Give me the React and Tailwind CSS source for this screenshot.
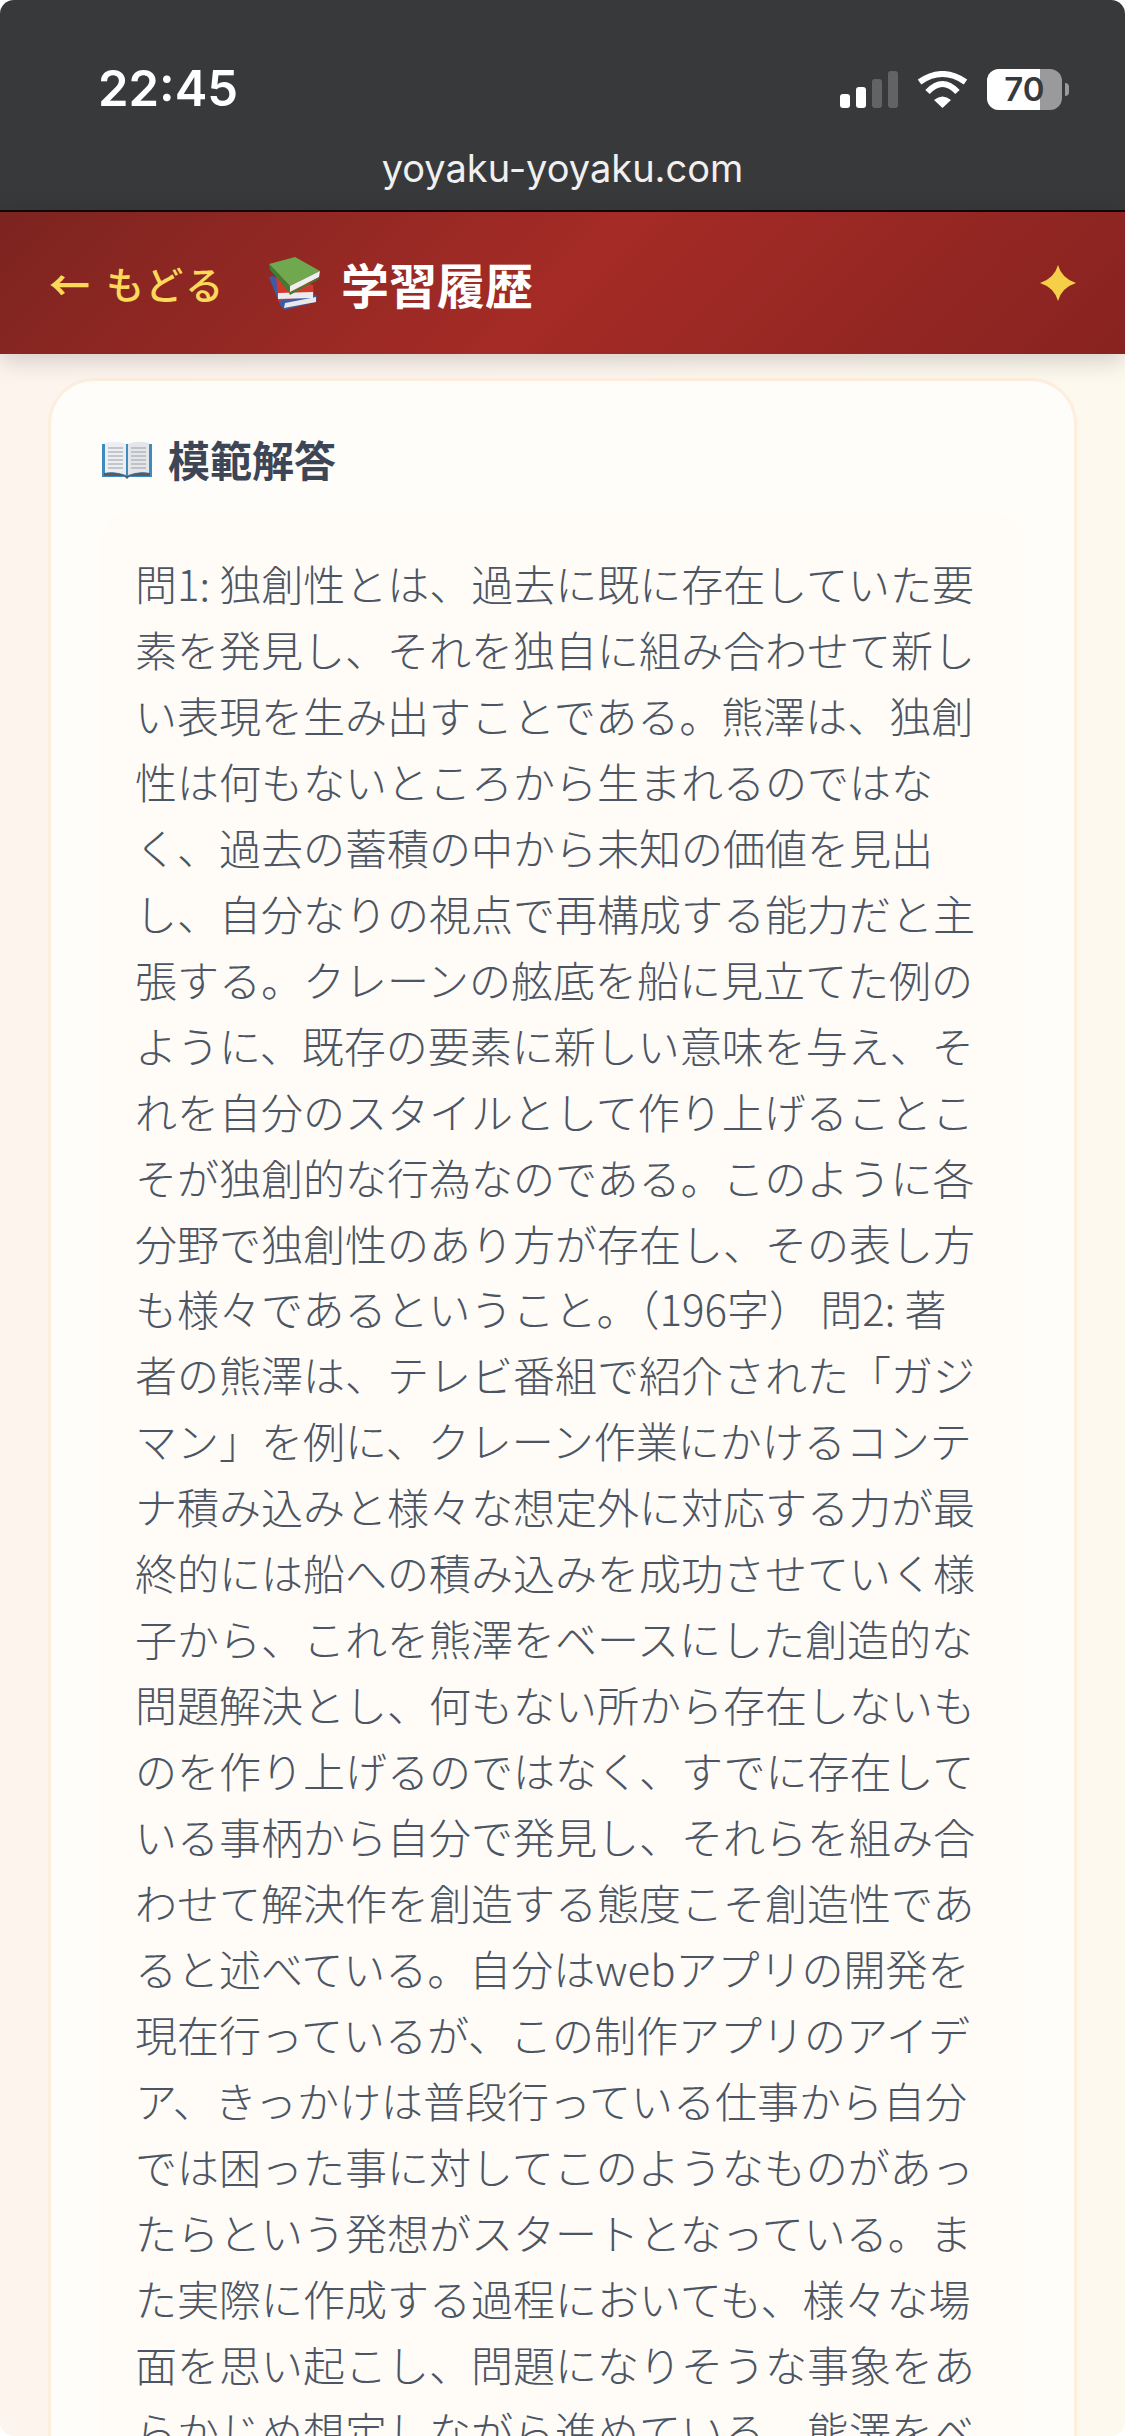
const lines = [
  "問1: 独創性とは、過去に既に存在していた要",
  "素を発見し、それを独自に組み合わせて新し",
  "い表現を生み出すことである。熊澤は、独創",
  "性は何もないところから生まれるのではな",
  "く、過去の蓄積の中から未知の価値を見出",
  "し、自分なりの視点で再構成する能力だと主",
  "張する。クレーンの舷底を船に見立てた例の",
  "ように、既存の要素に新しい意味を与え、そ",
  "れを自分のスタイルとして作り上げることこ",
  "そが独創的な行為なのである。このように各",
  "分野で独創性のあり方が存在し、その表し方",
  "も様々であるということ。（196字） 問2: 著",
  "者の熊澤は、テレビ番組で紹介された「ガジ",
  "マン」を例に、クレーン作業にかけるコンテ",
  "ナ積み込みと様々な想定外に対応する力が最",
  "終的には船への積み込みを成功させていく様",
  "子から、これを熊澤をベースにした創造的な",
  "問題解決とし、何もない所から存在しないも",
  "のを作り上げるのではなく、すでに存在して",
  "いる事柄から自分で発見し、それらを組み合",
  "わせて解決作を創造する態度こそ創造性であ",
  "ると述べている。自分はwebアプリの開発を",
  "現在行っているが、この制作アプリのアイデ",
  "ア、きっかけは普段行っている仕事から自分",
  "では困った事に対してこのようなものがあっ",
  "たらという発想がスタートとなっている。ま",
  "た実際に作成する過程においても、様々な場",
  "面を思い起こし、問題になりそうな事象をあ",
  "らかじめ想定しながら進めている。熊澤をベ",
];

function Signal() {
  return (
    <div className="flex items-end gap-[6px] h-[37px]">
      <div className="w-[10px] h-[14px] rounded-[3px] bg-white" />
      <div className="w-[10px] h-[21px] rounded-[3px] bg-white" />
      <div className="w-[10px] h-[29px] rounded-[3px] bg-[#626365]" />
      <div className="w-[10px] h-[37px] rounded-[3px] bg-[#626365]" />
    </div>
  );
}

function Wifi() {
  return (
    <svg width="51" height="37" viewBox="0 0 51 37" fill="none">
      <path d="M2.5 11 Q25.5 -5 48.5 11" stroke="#fff" strokeWidth="6" />
      <path d="M10.5 21 Q25.5 5 40.5 21" stroke="#fff" strokeWidth="6" />
      <path d="M17 29 Q25.5 22 34 29 L25.5 37 Z" fill="#fff" />
    </svg>
  );
}

function Battery() {
  return (
    <div className="flex items-center gap-[3px]">
      <div className="relative w-[75px] h-[41px] rounded-[12px] overflow-hidden flex bg-[#9a9a9c]">
        <div className="w-[53px] h-full bg-white" />
        <span className="absolute inset-0 flex items-center justify-center text-[33px] font-semibold text-[#38393b] font-['Inter',sans-serif] leading-none">
          70
        </span>
      </div>
      <div className="w-[4px] h-[13px] rounded-r-[4px] bg-[#9a9a9c]" />
    </div>
  );
}

function Books() {
  return (
    <svg width="51" height="53" viewBox="0 0 51 53" className="shrink-0">
      <path d="M0 20 L4 19 L48 39 L47 45 L15 53 L11 48 Z" fill="#3d5aa8" />
      <path d="M16 46 L47 40 L47 45 L15 51 Z" fill="#e8e8e8" />
      <path d="M7 18 L44 28 L45 38 L9 44 Z" fill="#cf3a2c" />
      <path d="M9 36 L44 35 L44 41 L9 42 Z" fill="#ececec" />
      <path d="M0 7 L26 0 L51 14 L21 29 Z" fill="#6fa84f" />
      <path d="M0 7 L21 29 L21 36 L1 13 Z" fill="#3f7d33" />
      <path d="M21 29 L51 14 L50 20 L21 35 Z" fill="#efefef" />
      <path d="M20 36 L51 20 L50 22 L21 38 Z" fill="#3f7d33" />
    </svg>
  );
}

function OpenBook() {
  return (
    <svg width="50" height="39" viewBox="0 0 50 39" className="shrink-0">
      <path d="M0 4 L50 4 L50 37 L0 37 Z" fill="#3f8bc0" />
      <path d="M3 3 Q15 0 24 4 L24 35 Q14 31 3 33 Z" fill="#eceef2" />
      <path d="M47 3 Q35 0 26 4 L26 35 Q36 31 47 33 Z" fill="#e4e6ea" />
      <path d="M6 8 H21 M6 12 H21 M6 16 H21 M6 20 H21 M6 24 H21 M6 28 H21 M29 8 H44 M29 12 H44 M29 16 H44 M29 20 H44 M29 24 H44 M29 28 H44" stroke="#9a9da3" strokeWidth="1" />
      <path d="M2 33 Q14 31 24 36 L26 36 Q36 31 48 33 L48 36 L28 36 L25 39 L22 36 L2 36 Z" fill="#5a5b5e" />
    </svg>
  );
}

function Sparkle() {
  return (
    <svg width="36" height="36" viewBox="0 0 35 35">
      <path d="M17.5 0 Q21 13 35 17.5 Q21 22 17.5 35 Q14 22 0 17.5 Q14 13 17.5 0 Z" fill="#f5cf48" />
    </svg>
  );
}

export default function App() {
  return (
    <div className="w-[1125px] h-[2436px] bg-white overflow-hidden">
      <div className="w-full h-full rounded-[14px] overflow-hidden flex flex-col bg-gradient-to-r from-[#fef4ee] to-[#fdf9ee] font-['Noto_Sans_CJK_JP',sans-serif]">
        <div className="h-[210px] shrink-0 bg-[#38393b] flex flex-col">
          <div className="flex justify-between items-center pl-[98px] pr-[56px] pt-[63px]">
            <span className="text-[49px] leading-[52px] font-semibold text-white font-['Inter',sans-serif]">22:45</span>
            <div className="flex items-center gap-[19px]">
              <Signal />
              <Wifi />
              <Battery />
            </div>
          </div>
          <div className="text-center text-[38px] leading-[44px] mt-[31px] text-[#f0f0f0] font-['Inter',sans-serif]">
            yoyaku-yoyaku.com
          </div>
        </div>

        <header className="relative z-10 h-[144px] shrink-0 border-t-2 border-[#140606] flex items-center justify-between pl-[49px] pr-[49px] bg-[linear-gradient(135deg,#7d2420,#a52b26_50%,#872320)] shadow-[0_6px_24px_rgba(0,0,0,0.18)]">
          <div className="flex items-center">
            <div className="flex items-center w-[220px] text-[#fdd95a] whitespace-nowrap">
              <span className="w-[57px] text-[41px] leading-none font-bold">←</span>
              <span className="text-[38px] leading-none font-medium tracking-[2px]">もどる</span>
            </div>
            <Books />
            <h1 className="ml-[21px] text-[48px] leading-none font-bold text-white whitespace-nowrap">学習履歴</h1>
          </div>
          <Sparkle />
        </header>

        <main className="px-[48px] pt-[24px]">
          <section className="rounded-[46px] border-[3px] border-[#fdeedd] bg-[#fffdfa] px-[49px] pt-[48px]">
            <h2 className="flex items-center gap-[16px] pl-[2px] text-[42px] leading-[60px] font-bold text-[#3d4656]">
              <OpenBook />
              <span>模範解答</span>
            </h2>
            <div className="mt-[24px] rounded-[30px] bg-[#fffbf7] pl-[35px] pr-[30px] pt-[37px] pb-[38px]">
              <p className="text-[42px] leading-[65.95px] font-light text-[#4b5563] whitespace-nowrap">
                {lines.map((l, i) => (
                  <span key={i} className="block">{l}</span>
                ))}
              </p>
            </div>
          </section>
        </main>
      </div>
    </div>
  );
}
